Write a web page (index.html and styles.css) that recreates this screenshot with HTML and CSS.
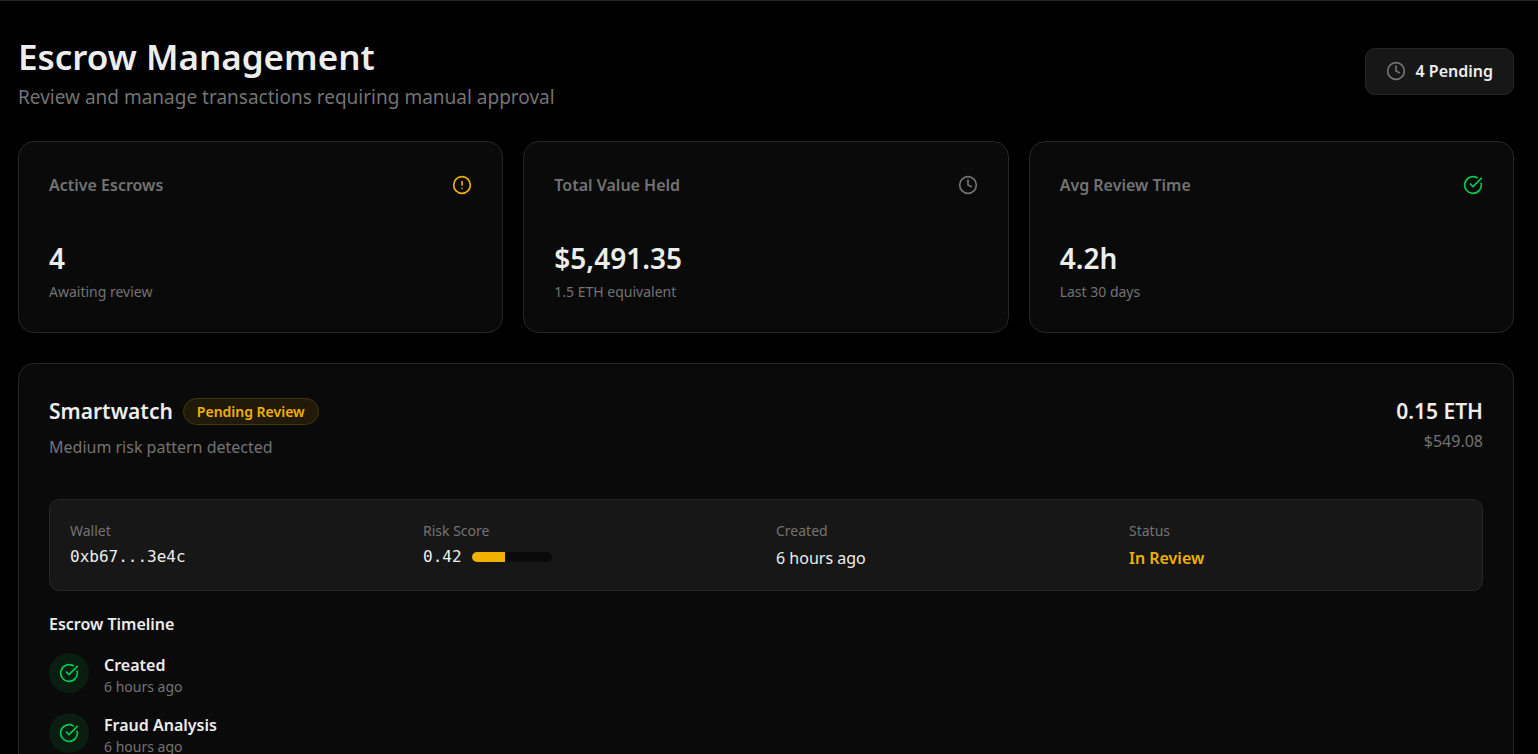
FILE: index.html
```html
<!DOCTYPE html>
<html lang="en">
<head>
    <meta charset="UTF-8">
    <meta name="viewport" content="width=device-width, initial-scale=1.0">
    <title>Escrow Management</title>
    <link rel="stylesheet" href="styles.css">
</head>
<body>
    <!-- shared icons -->
    <svg class="sprite" aria-hidden="true">
        <symbol id="icon-clock" viewBox="0 0 24 24">
            <circle cx="12" cy="12" r="10"/>
            <path d="M12 6v6l4 2"/>
        </symbol>
        <symbol id="icon-alert" viewBox="0 0 24 24">
            <circle cx="12" cy="12" r="10"/>
            <path d="M12 8v4"/>
            <path d="M12 16h.01"/>
        </symbol>
        <symbol id="icon-check" viewBox="0 0 24 24">
            <path d="M21.801 10A10 10 0 1 1 17 3.335"/>
            <path d="m9 11 3 3L22 4"/>
        </symbol>
    </svg>

    <main class="page">
        <header class="page-header">
            <div>
                <h1>Escrow Management</h1>
                <p class="subtitle">Review and manage transactions requiring manual approval</p>
            </div>
            <div class="pending-count">
                <svg class="icon muted"><use href="#icon-clock"/></svg>
                <span>4 Pending</span>
            </div>
        </header>

        <section class="stats">
            <div class="card">
                <div class="stat-head">
                    <h2>Active Escrows</h2>
                    <svg class="icon warning"><use href="#icon-alert"/></svg>
                </div>
                <div class="stat-value">4</div>
                <p class="small">Awaiting review</p>
            </div>
            <div class="card">
                <div class="stat-head">
                    <h2>Total Value Held</h2>
                    <svg class="icon muted"><use href="#icon-clock"/></svg>
                </div>
                <div class="stat-value">$5,491.35</div>
                <p class="small">1.5 ETH equivalent</p>
            </div>
            <div class="card">
                <div class="stat-head">
                    <h2>Avg Review Time</h2>
                    <svg class="icon success"><use href="#icon-check"/></svg>
                </div>
                <div class="stat-value">4.2h</div>
                <p class="small">Last 30 days</p>
            </div>
        </section>

        <section class="card escrow">
            <div class="escrow-head">
                <div>
                    <div class="escrow-title">
                        <h3>Smartwatch</h3>
                        <span class="badge">Pending Review</span>
                    </div>
                    <p class="reason">Medium risk pattern detected</p>
                </div>
                <div class="amount">
                    <div class="amount-eth">0.15 ETH</div>
                    <div class="amount-usd">$549.08</div>
                </div>
            </div>

            <dl class="details">
                <div>
                    <dt>Wallet</dt>
                    <dd class="mono">0xb67...3e4c</dd>
                </div>
                <div>
                    <dt>Risk Score</dt>
                    <dd class="mono risk">
                        <span>0.42</span>
                        <span class="risk-bar"><span class="risk-fill" style="width: 42%"></span></span>
                    </dd>
                </div>
                <div>
                    <dt>Created</dt>
                    <dd>6 hours ago</dd>
                </div>
                <div>
                    <dt>Status</dt>
                    <dd class="status">In Review</dd>
                </div>
            </dl>

            <h4>Escrow Timeline</h4>
            <ol class="timeline">
                <li>
                    <span class="step-icon"><svg class="icon success"><use href="#icon-check"/></svg></span>
                    <div>
                        <div class="step-name">Created</div>
                        <div class="small">6 hours ago</div>
                    </div>
                </li>
                <li>
                    <span class="step-icon"><svg class="icon success"><use href="#icon-check"/></svg></span>
                    <div>
                        <div class="step-name">Fraud Analysis</div>
                        <div class="small">6 hours ago</div>
                    </div>
                </li>
            </ol>
        </section>
    </main>
</body>
</html>
```
FILE: styles.css
```css
* {
    box-sizing: border-box;
}

body {
    margin: 0;
    background-color: #000;
    color: #ededed;
    font-family: "Segoe UI", "Noto Sans", sans-serif;
    font-size: 16px;
    line-height: 24px;
    height: 100vh;
    overflow: hidden;
}

h1, h2, h3, h4, p, dl, dd, ol {
    margin: 0;
    padding: 0;
}

.sprite {
    display: none;
}

.icon {
    width: 20px;
    height: 20px;
    flex-shrink: 0;
    fill: none;
    stroke: currentColor;
    stroke-width: 2;
    stroke-linecap: round;
    stroke-linejoin: round;
}

.muted {
    color: #737373;
}

.warning {
    color: #f0b100;
}

.success {
    color: #00c951;
}

.page {
    border-top: 1px solid #262626;
    padding: 30px 24px 30px 18px;
}

.page-header {
    display: flex;
    justify-content: space-between;
    align-items: center;
    margin-bottom: 30px;
}

h1 {
    font-size: 35px;
    font-weight: 600;
    line-height: 52px;
}

.subtitle {
    color: #737373;
    font-size: 19px;
    line-height: 28px;
}

.pending-count {
    display: flex;
    align-items: center;
    gap: 10px;
    padding: 10px 20px;
    background-color: #171717;
    border: 1px solid #262626;
    border-radius: 10px;
    font-weight: 600;
    line-height: 25px;
}

.card {
    background-color: #0a0a0a;
    border: 1px solid #262626;
    border-radius: 16px;
    padding: 30px;
}

.stats {
    display: grid;
    grid-template-columns: repeat(3, 1fr);
    gap: 20px;
    margin-bottom: 30px;
}

.stat-head {
    display: flex;
    justify-content: space-between;
    align-items: center;
    margin-bottom: 40px;
}

h2 {
    color: #737373;
    font-size: 16px;
    font-weight: 600;
    line-height: 26px;
}

.stat-value {
    font-size: 28px;
    font-weight: 600;
    line-height: 40px;
    margin-bottom: 4px;
}

.small {
    color: #737373;
    font-size: 14px;
    line-height: 20px;
}

.escrow-head {
    display: flex;
    justify-content: space-between;
    margin-bottom: 39px;
}

.escrow-title {
    display: flex;
    align-items: center;
    gap: 10px;
    margin-bottom: 6px;
}

h3, .amount-eth {
    font-size: 21px;
    font-weight: 600;
    line-height: 35px;
}

.badge {
    padding: 2px 13px;
    background-color: #211a09;
    border: 1px solid #44350a;
    border-radius: 16px;
    color: #f0b100;
    font-size: 14px;
    font-weight: 600;
    line-height: 21px;
}

.reason, .amount-usd {
    color: #737373;
    line-height: 25px;
}

.amount {
    text-align: right;
}

.details {
    display: grid;
    grid-template-columns: repeat(4, 1fr);
    gap: 20px;
    padding: 20px;
    margin-bottom: 20px;
    background-color: #171717;
    border: 1px solid #262626;
    border-radius: 10px;
}

dt {
    color: #737373;
    font-size: 14px;
    line-height: 22px;
    margin-bottom: 4px;
}

dd {
    line-height: 24px;
}

.mono {
    font-family: Consolas, "DejaVu Sans Mono", monospace;
    line-height: 22px;
}

.risk {
    display: flex;
    align-items: center;
    gap: 10px;
}

.risk-bar {
    width: 80px;
    height: 10px;
    background-color: #0a0a0a;
    border-radius: 5px;
    overflow: hidden;
}

.risk-fill {
    display: block;
    height: 100%;
    background-color: #f0b100;
}

.status {
    color: #f0b100;
    font-weight: 600;
}

h4 {
    font-size: 16px;
    font-weight: 600;
    line-height: 27px;
    margin-bottom: 15px;
}

.timeline {
    display: flex;
    flex-direction: column;
    gap: 16px;
    list-style: none;
}

.timeline li {
    display: flex;
    gap: 15px;
}

.step-icon {
    display: flex;
    align-items: center;
    justify-content: center;
    width: 40px;
    height: 40px;
    border-radius: 50%;
    background-color: #091d11;
}

.step-name {
    font-weight: 600;
    line-height: 24px;
}
```
